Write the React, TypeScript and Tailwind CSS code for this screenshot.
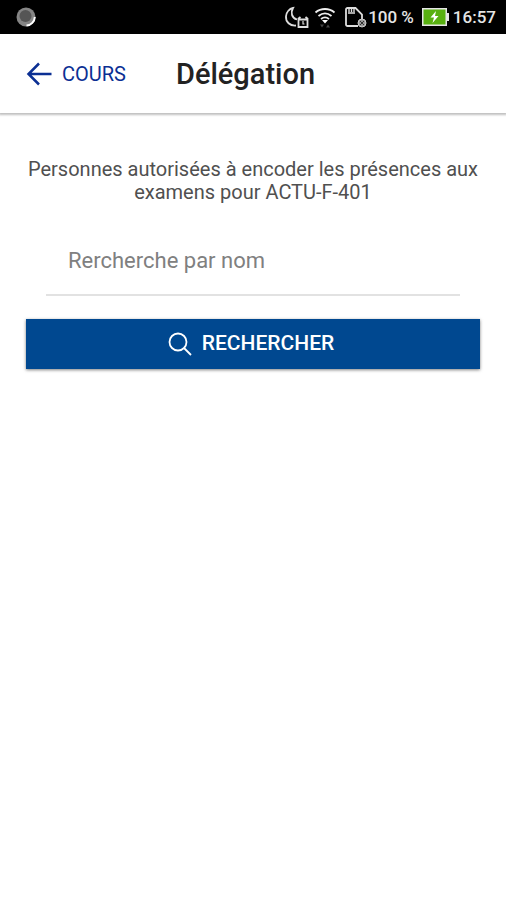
import React from "react";

function StatusBar() {
  return (
    <div className="flex h-[34px] items-center bg-black pr-[10px] pl-4 text-[17px] leading-6 font-medium text-neutral-200">
      <svg width="20" height="20" viewBox="0 0 20 20" aria-hidden="true">
        <circle cx="10" cy="10" r="9.5" fill="#858585" />
        <circle cx="9.5" cy="9" r="6" fill="#555" />
        <path d="M18.800 10a9 9 0 0 1-8.300 8.600" fill="none" stroke="#fff" strokeWidth="2" />
      </svg>
      <div className="ml-auto flex items-center">
        <svg width="26" height="24" viewBox="0 0 26 24" fill="none" stroke="#ddd" strokeWidth="1.8" aria-hidden="true">
          <path d="M12 20.500C6 21 1.500 17 2 11.300c.4-4.300 3.500-7.500 7-8.300-2.500 4.500-1.500 10 4 11.500" />
          <path d="M14.500 14.500h9v7.500h-9zM14 14l2.500-2M24 14l-2.500-2" />
          <path d="M19 16v3h1.500" strokeWidth="1.200" />
        </svg>
        <svg className="ml-1" width="22" height="24" viewBox="0 0 22 24" fill="none" stroke="#eee" strokeWidth="1.800" aria-hidden="true">
          <path d="M1.500 7.500c5.500-4.700 13.500-4.700 19 0M4.500 11c4-3.300 9-3.300 13 0M7 14c2.500-2 5.500-2 8 0" />
          <path d="M8 15h6L11 18.500z" fill="#fff" stroke="none" />
          <path d="M6 19.500h4l-2 3zM14 19.500l2 3h-4z" fill="#444" stroke="none" />
        </svg>
        <svg className="ml-2" width="24" height="24" viewBox="0 0 24 24" fill="none" stroke="#ddd" strokeWidth="1.800" aria-hidden="true">
          <path d="M14 21H3.500A1.500 1.500 0 0 1 2 19.500V4.500A1.500 1.500 0 0 1 3.500 3h8l6.500 6.500V14" />
          <path d="M5 3v4M7.500 3v4M10 3v4M4 8h7" strokeWidth="1.400" />
          <circle cx="18" cy="18" r="4" fill="#999" stroke="#ccc" strokeWidth="1" />
          <path d="M16 16l4 4M20 16l-4 4" stroke="#333" strokeWidth="1" />
        </svg>
        <span>100 %</span>
        <svg className="mr-1 ml-2" width="27" height="18" viewBox="0 0 27 18" aria-hidden="true">
          <path d="M0 0h25v5h2v8h-2v5H0z" fill="#e5e5e5" />
          <path d="M1.500 1.500h22v15h-22z" fill="#58b010" />
          <path d="M14 3l-5.500 6.500H12L10.500 15l6-7H13z" fill="#fff" />
        </svg>
        <span>16:57</span>
      </div>
    </div>
  );
}

export default function App() {
  return (
    <div className="min-h-screen bg-white font-[Roboto,sans-serif]">
      <StatusBar />
      <header className="flex h-[79px] items-center bg-white pl-[26px] shadow-[0_1px_2px_1px_rgba(0,0,0,0.25)]">
        <button type="button" className="flex items-center gap-[10px] text-xl text-[#0b2f93]">
          <svg width="26" height="26" viewBox="0 0 26 26" fill="none" stroke="currentColor" strokeWidth="2.500" aria-hidden="true">
            <path d="M13 2.500L2.500 13 13 23.500M3 13h22.500" />
          </svg>
          COURS
        </button>
        <h1 className="ml-[50px] text-[29px] leading-9 font-medium text-[#222]">Délégation</h1>
      </header>
      <main className="px-[26px] pt-[45px]">
        <p className="text-center text-xl leading-[23px] text-[#505050]">
          Personnes autorisées à encoder les présences aux examens pour ACTU-F-401
        </p>
        <form onSubmit={(event) => event.preventDefault()}>
          <input
            type="search"
            aria-label="Rercherche par nom"
            placeholder="Rercherche par nom"
            className="mx-5 mt-[22px] block h-[70px] w-[calc(100%-40px)] border-b-2 border-[#e2e2e2] bg-transparent px-[22px] text-[22px] text-[#444] outline-none placeholder:text-[#808080]"
          />
          <button
            type="submit"
            className="mt-[23px] flex h-[50px] w-full items-center justify-center gap-[10px] bg-[#004890] pr-1 text-[21px] font-medium text-white shadow-[0_1px_3px_rgba(0,0,0,0.5)]"
          >
            <svg width="24" height="24" viewBox="0 0 24 24" fill="none" stroke="currentColor" strokeWidth="1.800" aria-hidden="true">
              <circle cx="10" cy="10" r="8.500" />
              <path d="M16 16l7 7" />
            </svg>
            RECHERCHER
          </button>
        </form>
      </main>
    </div>
  );
}
